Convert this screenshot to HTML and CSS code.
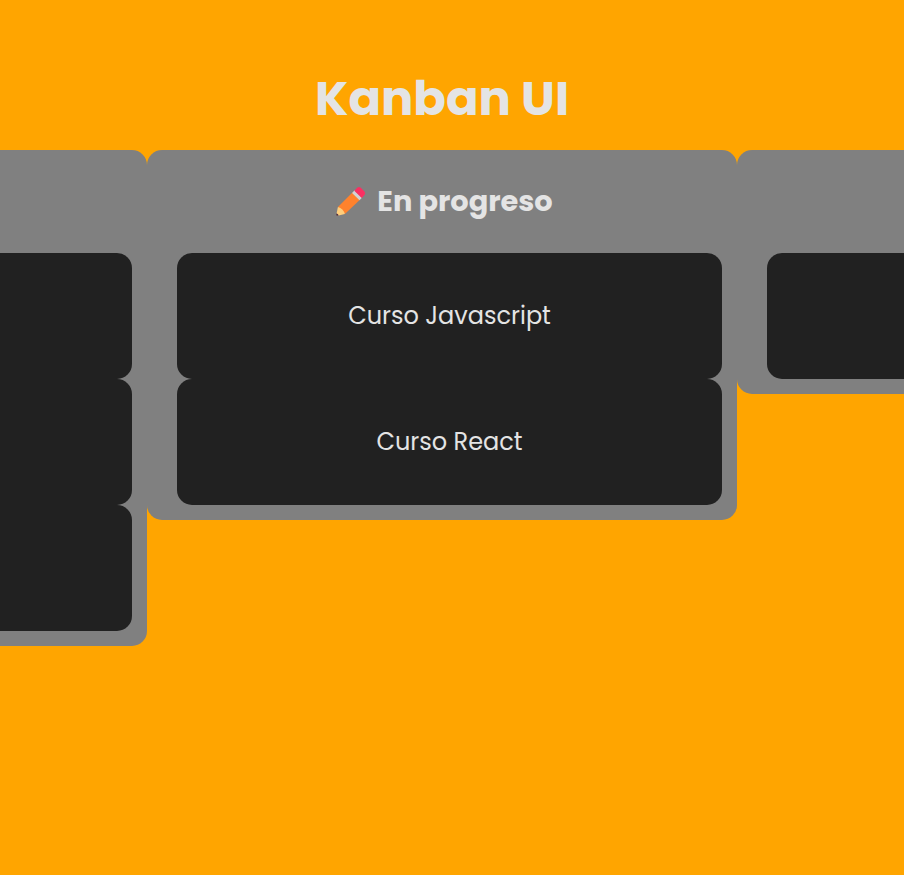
FILE: index.html
```html
<!DOCTYPE html>
<html lang="es">
<head>
<meta charset="utf-8">
<title>Kanban UI</title>
<link rel="stylesheet" href="styles.css">
</head>
<body>
<main class="page">
  <h1 class="title">Kanban UI</h1>
  <div class="board">
    <section class="column">
      <header class="column-header"></header>
      <div class="cards">
        <article class="card"></article>
        <article class="card"></article>
        <article class="card"></article>
      </div>
    </section>
    <section class="column">
      <header class="column-header">
        <svg class="pencil" viewBox="0 0 32 32" aria-hidden="true">
          <path fill="#ff822d" d="M3 21.600 18 6.700 25.700 14.300 10.200 29z"/>
          <path fill="#ffce7c" d="M3 21.600Q8.500 23 10.200 29L2.600 30.600Q1.300 30.700 1.400 29.600z"/>
          <path fill="#321b41" d="M1.700 28.200 3.900 30.300 2.300 30.700Q1.200 30.800 1.300 29.700z"/>
          <path fill="#d3d3d3" d="M17.600 7.100 20.200 4.500 27.900 12.100 25.300 14.700z"/>
          <path class="eraser" d="M19.900 4.800 22.900 1.900Q24.700 .4 26.600 1.900L30.400 5.600Q31.900 7.400 30.400 9.200L27.600 12.400z"/>
        </svg>
        <h2 class="column-title">En progreso</h2>
      </header>
      <div class="cards">
        <article class="card"><p>Curso Javascript</p></article>
        <article class="card"><p>Curso React</p></article>
      </div>
    </section>
    <section class="column">
      <header class="column-header"></header>
      <div class="cards">
        <article class="card"></article>
      </div>
    </section>
  </div>
</main>
</body>
</html>
```
FILE: styles.css
```css
* { box-sizing: border-box; }
html, body { height: 100%; }
body {
  margin: 0;
  overflow: hidden;
  background: #ffa500;
  color: #e4e4e4;
  font-family: Poppins, Inter, sans-serif;
}
.page {
  height: 100%;
  padding: 63px 20px 0 0;
  overflow: hidden;
}
.title {
  height: 72px;
  margin: 0 0 15px;
  font-size: 48px;
  line-height: 72px;
  font-weight: 700;
  text-align: center;
}
.board { display: flex; justify-content: center; align-items: flex-start; }
.column {
  flex: 0 0 590px;
  padding: 0 15px 15px 30px;
  background: #808080;
  border-radius: 15px;
}
.column-header {
  display: flex;
  justify-content: center;
  align-items: center;
  gap: 11px;
  height: 103px;
  margin-left: -11px;
}
.pencil { width: 31px; height: 31px; flex: none; margin-bottom: 1px; }
.eraser { fill: #fa2f62; }
.column-title { margin: 0; font-size: 28.8px; line-height: 43px; font-weight: 700; white-space: nowrap; }
.card {
  display: flex;
  align-items: center;
  justify-content: center;
  height: 126px;
  background: #212121;
  border-radius: 15px;
}
.card p { margin: 0; font-size: 24px; line-height: 36px; white-space: nowrap; }
```
